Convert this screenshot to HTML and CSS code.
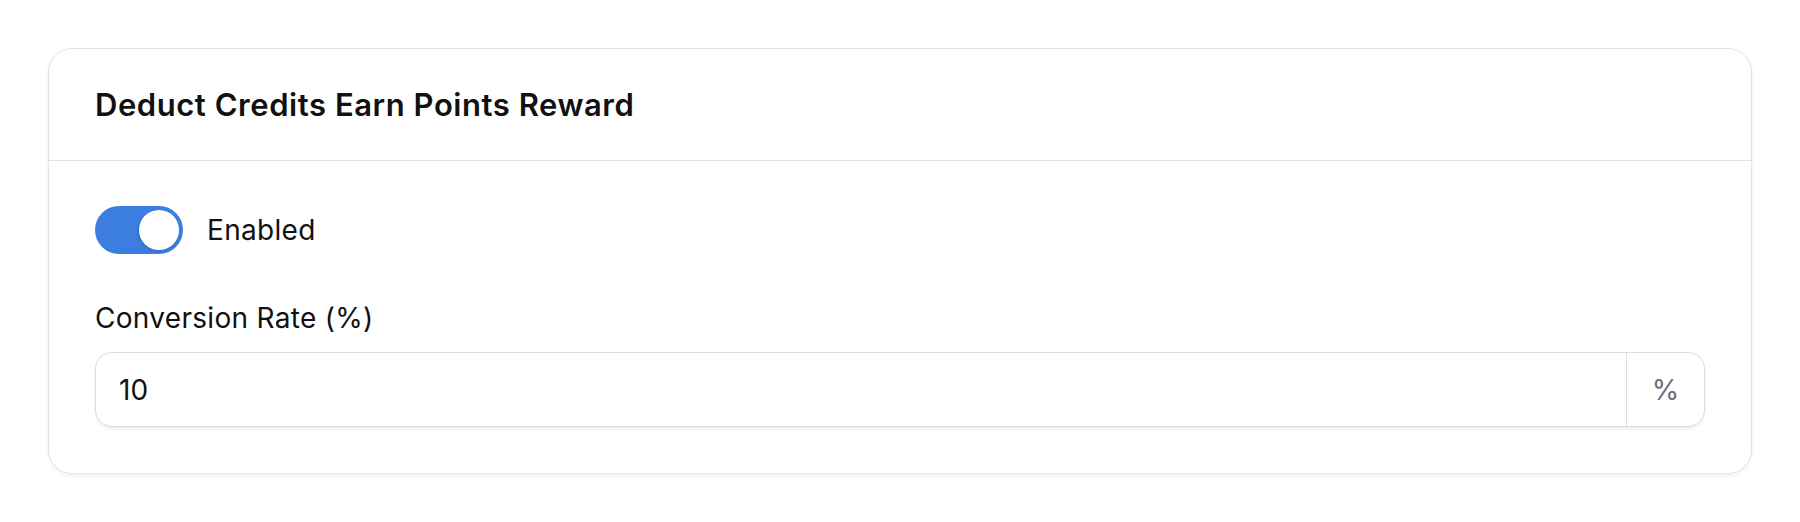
FILE: index.html
```html
<!DOCTYPE html>
<html lang="en">
<head>
  <meta charset="UTF-8">
  <title>Rewards Settings</title>
  <link rel="stylesheet" href="styles.css">
</head>
<body>
  <div class="card">
    <div class="card-header">
      <h2>Deduct Credits Earn Points Reward</h2>
    </div>
    <div class="card-body">
      <label class="switch-row">
        <span class="switch on"><span class="knob"></span></span>
        <span class="switch-label">Enabled</span>
      </label>

      <div class="field">
        <label class="field-label" for="rate">Conversion Rate (%)</label>
        <div class="input-group">
          <input type="text" id="rate" class="input" value="10">
          <span class="suffix">%</span>
        </div>
      </div>
    </div>
  </div>
</body>
</html>
```

FILE: styles.css
```css
body {
  margin: 0;
  padding: 48px;
  font-family: Inter, "Noto Sans", Arial, sans-serif;
  color: #111;
  background: #fff;
}
.card {
  border: 1.5px solid #e4e4e4;
  border-radius: 24px;
  box-shadow: 0 2px 4px rgba(0, 0, 0, 0.06);
  background: #fff;
}
.card-header {
  height: 111px;
  display: flex;
  align-items: center;
  padding: 0 46px;
  border-bottom: 1.5px solid #e4e4e4;
}
.card-header h2 {
  margin: 0;
  font-size: 31px;
  font-weight: 600;
  letter-spacing: 0.55px;
}
.card-body {
  padding: 45px 46px 46px;
}
.switch-row {
  display: flex;
  align-items: center;
  gap: 24px;
}
.switch {
  width: 88px;
  height: 48px;
  border-radius: 24px;
  background: #3c7de0;
  box-sizing: border-box;
  padding: 4px;
  display: flex;
  justify-content: flex-end;
}
.knob {
  width: 40px;
  height: 40px;
  border-radius: 50%;
  background: #fff;
  box-shadow: -1px 1px 3px rgba(0, 0, 0, 0.15);
}
.switch-label {
  font-size: 28px;
  letter-spacing: 0.3px;
}
.field {
  margin-top: 44px;
}
.field-label {
  display: block;
  font-size: 28px;
  line-height: 40px;
  letter-spacing: 0.3px;
  margin-bottom: 14px;
}
.input-group {
  display: flex;
  height: 75px;
  box-sizing: border-box;
  border: 1.5px solid #dcdcdc;
  border-radius: 17px;
  box-shadow: 0 2px 3px rgba(0, 0, 0, 0.07);
  overflow: hidden;
}
.input {
  flex: 1;
  border: none;
  outline: none;
  padding: 0 23px;
  font-family: inherit;
  font-size: 28px;
  color: #111;
  background: transparent;
}
.suffix {
  width: 77px;
  display: flex;
  align-items: center;
  justify-content: center;
  border-left: 1.5px solid #dcdcdc;
  font-size: 28px;
  color: #6e6e7a;
}
```
